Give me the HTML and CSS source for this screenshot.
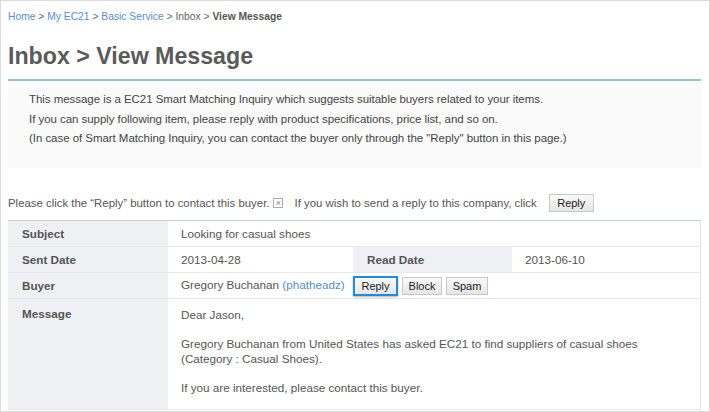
FILE: index.html
```html
<!DOCTYPE html>
<html>
<head>
<meta charset="utf-8">
<link rel="stylesheet" href="styles.css">
</head>
<body>
<div class="frame">
  <div class="crumbs">
    <a href="#">Home</a> &gt; <a href="#">My EC21</a> &gt; <a href="#">Basic Service</a> &gt; Inbox &gt; <b>View Message</b>
  </div>
  <h1 class="title">Inbox &gt; View Message</h1>
  <div class="notice">
    <p>This message is a EC21 Smart Matching Inquiry which suggests suitable buyers related to your items.</p>
    <p>If you can supply following item, please reply with product specifications, price list, and so on.</p>
    <p>(In case of Smart Matching Inquiry, you can contact the buyer only through the "Reply" button in this page.)</p>
  </div>
  <div class="hint">
    <span>Please click the “Reply” button to contact this buyer.</span>
    <span class="xicon">×</span>
    <span class="hint2">If you wish to send a reply to this company, click</span>
    <button class="btn">Reply</button>
  </div>
  <table class="info">
    <tr>
      <th>Subject</th>
      <td colspan="3">Looking for casual shoes</td>
    </tr>
    <tr>
      <th>Sent Date</th>
      <td class="mid">2013-04-28</td>
      <th class="th2">Read Date</th>
      <td>2013-06-10</td>
    </tr>
    <tr>
      <th>Buyer</th>
      <td colspan="3" class="buyer">Gregory Buchanan <a href="#">(phatheadz)</a>
        <button class="btn focus">Reply</button><button class="btn b-block">Block</button><button class="btn b-spam">Spam</button>
      </td>
    </tr>
    <tr class="msg">
      <th>Message</th>
      <td colspan="3">
        <p>Dear Jason,</p>
        <p>Gregory Buchanan from United States has asked EC21 to find suppliers of casual shoes<br>(Category : Casual Shoes).</p>
        <p>If you are interested, please contact this buyer.</p>
      </td>
    </tr>
  </table>
</div>
</body>
</html>
```
FILE: styles.css
```css
html, body { margin: 0; padding: 0; }
body {
  font-family: "Liberation Sans", Arial, sans-serif;
  font-size: 12px;
  color: #555;
  background: #fff;
}
.frame {
  width: 693px;
  height: 410px;
  border: 1px solid #dcdcdc;
  overflow: hidden;
  padding: 0 8px 0 7px;
  box-sizing: content-box;
}
.crumbs {
  font-size: 10.3px;
  color: #666;
  padding-top: 9px;
  height: 14px;
  line-height: 14px;
}
.crumbs a { color: #5a8ccc; text-decoration: none; }
.crumbs b { color: #555; }
.title {
  margin: 18px 0 0;
  font-size: 23.2px;
  line-height: 28px;
  font-weight: bold;
  color: #5a5a5a;
  padding-bottom: 9px;
  border-bottom: 2px solid #8cc6da;
}
.notice {
  background: #fafafa;
  padding: 9px 0 10px 21px;
  height: 68px;
  color: #444;
}
.notice p {
  margin: 0;
  line-height: 19.5px;
  font-size: 11.5px;
  letter-spacing: -0.05px;
}
.hint {
  margin-top: 26px;
  display: flex;
  align-items: center;
  height: 18px;
  color: #555;
  font-size: 11.4px;
}
.xicon {
  display: inline-flex;
  align-items: center;
  justify-content: center;
  width: 8px;
  height: 8px;
  border: 1px solid #aaa;
  font-size: 9px;
  line-height: 8px;
  color: #888;
  margin-left: 4px;
}
.hint2 { margin-left: 11px; }
.btn {
  font-family: "Liberation Sans", Arial, sans-serif;
  font-size: 11px;
  color: #222;
  background: linear-gradient(#fafafa, #e6e6e6);
  border: 1px solid #c8c8c8;
  height: 18px;
  padding: 0;
  margin: 0;
  line-height: 16px;
  text-align: center;
}
.hint .btn { margin-left: 12px; width: 45px; }
.info {
  margin-top: 8px;
  width: 693px;
  border-collapse: collapse;
  border-top: 1px solid #c4ccd8;
  border-right: 1px solid #dfe2e8;
  font-size: 11.7px;
}
.info th, .info td {
  text-align: left;
  border-bottom: 1px solid #e6e8ec;
  height: 25px;
  padding: 0 0 0 13px;
  vertical-align: middle;
}
.info th {
  background: #eef0f4;
  font-weight: bold;
  color: #555;
  width: 146px;
  padding-left: 14px;
}
.info th.th2 { width: 145px; }
.info td { color: #555; }
.info td.mid { width: 172px; }
.info a { color: #5a8ccc; text-decoration: none; }
.buyer .btn { vertical-align: middle; }
.buyer .btn.focus {
  margin-left: 5px;
  width: 45px;
  height: 20px;
  border: 2px solid #1f8ae0;
  box-shadow: 0 1px 2px rgba(0,0,0,0.3);
  line-height: 16px;
}
.buyer .b-block { margin-left: 4px; width: 40px; }
.buyer .b-spam { margin-left: 4px; width: 42px; }
.msg th, .msg td { vertical-align: top; padding-top: 8px; }
.msg td p { margin: 0 0 14px; line-height: 15px; }
```
